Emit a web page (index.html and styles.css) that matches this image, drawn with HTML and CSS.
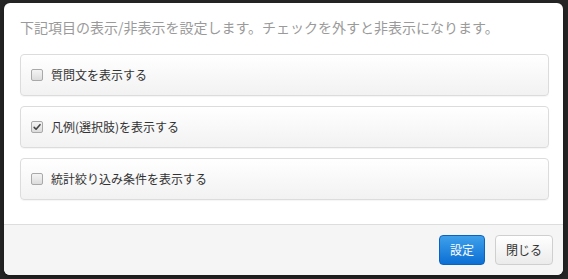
FILE: index.html
```html
<!DOCTYPE html>
<html lang="ja">
<head>
<meta charset="utf-8">
<link rel="stylesheet" href="styles.css">
</head>
<body>
<div class="modal">
  <div class="modal-body">
    <p class="lead">下記項目の表示/非表示を設定します。チェックを外すと非表示になります。</p>
    <label class="panel">
      <span class="check"></span>
      <span class="label">質問文を表示する</span>
    </label>
    <label class="panel">
      <span class="check checked"><svg viewBox="0 0 12 12" width="12" height="12"><path d="M2.6 6.4 L4.9 8.7 L9.6 3.2" fill="none" stroke="#444" stroke-width="1.9" stroke-linecap="round" stroke-linejoin="round"/></svg></span>
      <span class="label">凡例(選択肢)を表示する</span>
    </label>
    <label class="panel">
      <span class="check"></span>
      <span class="label">統計絞り込み条件を表示する</span>
    </label>
  </div>
  <div class="modal-footer">
    <button class="btn btn-primary">設定</button>
    <button class="btn btn-default">閉じる</button>
  </div>
</div>
</body>
</html>
```
FILE: styles.css
```css
html, body {
  margin: 0;
  padding: 0;
  background: #262626;
  width: 568px;
  height: 279px;
  overflow: hidden;
  font-family: "Noto Sans CJK JP", "Liberation Sans", sans-serif;
}
.modal {
  margin: 3px 5px 0 4px;
  width: 559px;
  height: 272px;
  background: #fff;
  border-radius: 6px;
  overflow: hidden;
  box-shadow: 0 2px 6px rgba(0,0,0,0.4);
  display: flex;
  flex-direction: column;
}
.modal-body {
  padding: 14px 14px 24px 16px;
}
.lead {
  margin: 0 0 17px 0;
  font-size: 14px;
  line-height: 20px;
  color: #9a9a9a;
  white-space: nowrap;
}
.panel {
  display: flex;
  align-items: center;
  height: 42px;
  box-sizing: border-box;
  border: 1px solid #dcdcdc;
  border-radius: 4px;
  background: linear-gradient(#ffffff, #f2f2f2);
  box-shadow: 0 1px 1px rgba(0,0,0,0.04);
  margin-bottom: 10px;
  padding-left: 10px;
}
.panel:last-of-type {
  margin-bottom: 0;
}
.check {
  width: 12px;
  height: 12px;
  box-sizing: border-box;
  border: 1px solid #a9a9a9;
  border-radius: 2px;
  background: linear-gradient(#f4f4f4, #dcdcdc);
  display: flex;
  align-items: center;
  justify-content: center;
  flex: none;
}
.check svg {
  display: block;
  margin-top: -1px;
}
.label {
  margin-left: 8px;
  font-size: 12px;
  color: #333;
  line-height: 16px;
}
.modal-footer {
  flex: 1;
  background: #f5f5f5;
  border-top: 1px solid #dddddd;
  display: flex;
  justify-content: flex-end;
  align-items: flex-start;
  gap: 10px;
  padding: 10px 10px 0 0;
}
.btn {
  height: 30px;
  padding: 0 10px;
  border-radius: 4px;
  font-family: "Noto Sans CJK JP", "Liberation Sans", sans-serif;
  font-size: 12px;
  line-height: 28px;
  cursor: pointer;
}
.btn-primary {
  color: #fff;
  background: linear-gradient(#3fa0ea, #0b6fd5);
  border: 1px solid #0c63bf;
  width: 46px;
}
.btn-default {
  color: #333;
  background: linear-gradient(#ffffff, #ebebeb);
  border: 1px solid #cfcfcf;
  width: 58px;
}
```
